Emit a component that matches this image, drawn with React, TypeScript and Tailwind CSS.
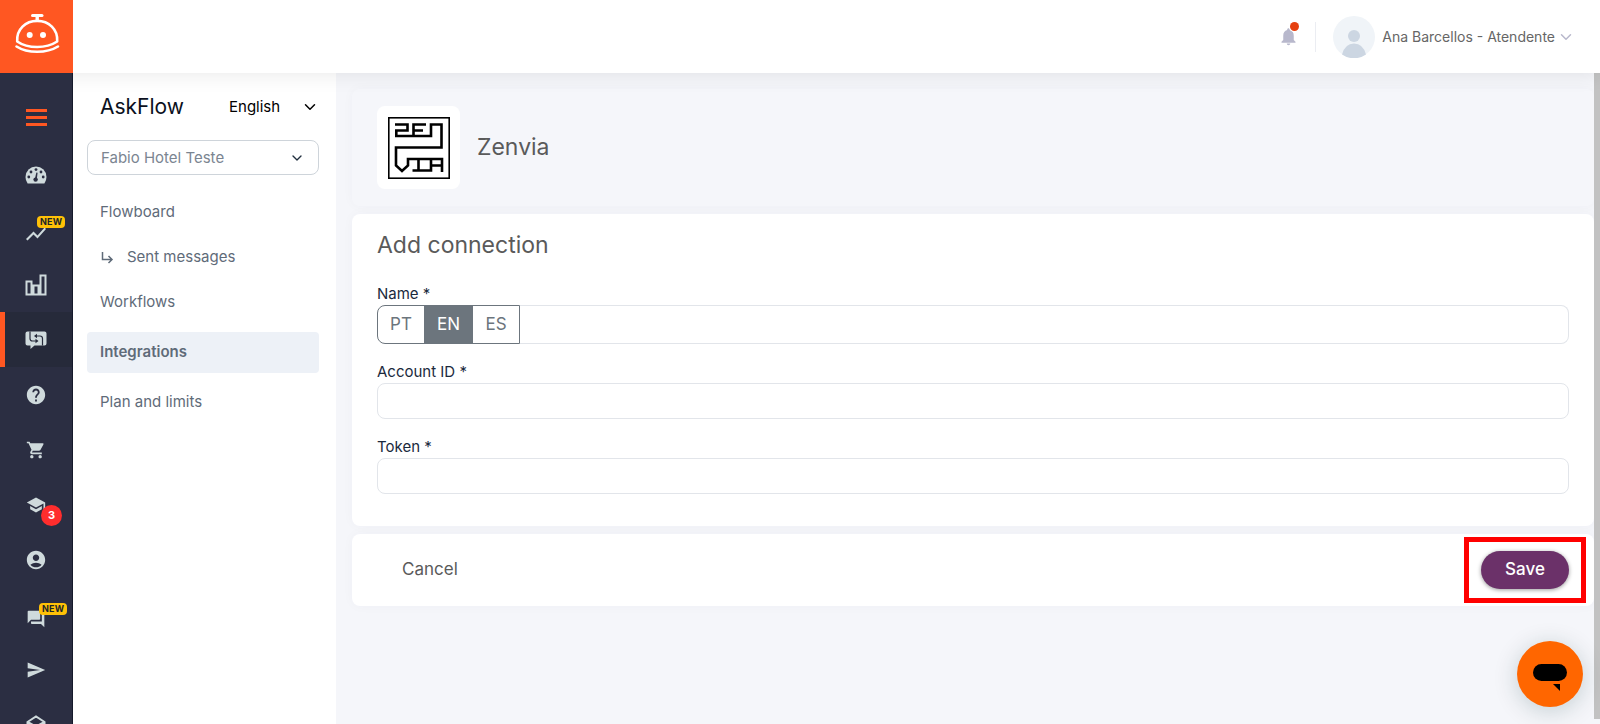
import type { ReactNode } from "react";
import { ChevronDown } from "lucide-react";
import {
  MdAccountCircle,
  MdForum,
  MdHelp,
  MdNotifications,
  MdSchool,
  MdSend,
  MdShoppingCart,
  MdShowChart,
} from "react-icons/md";

function BellBotLogo() {
  return (
    <svg width="46" height="42" viewBox="0 0 46 42" fill="none" stroke="#fff" aria-hidden="true">
      <path d="M18.5 2.5H28" strokeWidth="3" strokeLinecap="round" />
      <path d="M23.2 3V8" strokeWidth="3.4" />
      <path
        d="M3.2 28.5C2.4 16.5 11.5 7.9 23.2 7.9S44 16.5 43.2 28.5C37.5 32.2 30.5 34 23.2 34S8.5 32.2 3.2 28.5Z"
        strokeWidth="2.6"
        strokeLinejoin="round"
      />
      <path
        d="M2.5 33.5C8 37 15 38.8 23.2 38.8S38.4 37 44 33.5"
        strokeWidth="2.6"
        strokeLinecap="round"
      />
      <circle cx="15.7" cy="22" r="3" fill="#fff" stroke="none" />
      <circle cx="29" cy="22" r="3" fill="#fff" stroke="none" />
    </svg>
  );
}

function GaugeIcon() {
  return (
    <svg width="22" height="18" viewBox="0 0 22 18" aria-hidden="true">
      <path d="M2.6 17.5Q0.5 14.500 0.5 11A10.500 10.500 0 0 1 21.5 11Q21.500 14.500 19.400 17.5Z" fill="currentColor" />
      <g fill="#2b2e42">
        <circle cx="3.8" cy="11" r="1.4" />
        <circle cx="6" cy="6" r="1.4" />
        <circle cx="11" cy="3.6" r="1.4" />
        <circle cx="16" cy="6" r="1.4" />
        <circle cx="18.2" cy="11" r="1.4" />
        <circle cx="10.6" cy="13.6" r="2.2" />
        <path d="M9.800 13L11.400 6.500L12.600 6.800L11.800 13.500Z" />
      </g>
    </svg>
  );
}

function BarsIcon() {
  return (
    <svg width="22" height="22" viewBox="0 0 22 22" fill="none" stroke="currentColor" strokeWidth="2" aria-hidden="true">
      <path d="M1.5 7.5H6.5V20.5H1.5ZM8.5 11.5H13.5V20.5H8.5ZM15.5 1.5H20.5V20.5H15.5Z" />
    </svg>
  );
}

function FlowChatIcon() {
  return (
    <svg width="22" height="18" viewBox="0 0 22 18" aria-hidden="true">
      <path
        d="M2.5 0.5H19.5Q21.5 0.5 21.5 2.5V12.5Q21.5 14.5 19.5 14.5H9.5L5.5 18V14.5H2.5Q0.5 14.5 0.5 12.5V2.5Q0.5 0.5 2.5 0.5Z"
        fill="currentColor"
      />
      <g fill="none" stroke="#262a3a" strokeWidth="1.2">
        <path d="M5 0.5V7.5Q5 10 7.5 10H11" />
        <path d="M17.5 14.5V7.5Q17.5 5 15 5H11.5" />
      </g>
      <path d="M10.5 7.8L13.5 10L10.5 12.2ZM12 2.8L9 5L12 7.2Z" fill="#262a3a" />
    </svg>
  );
}

function CubeIcon() {
  return (
    <svg width="20" height="20" viewBox="0 0 20 20" fill="none" stroke="currentColor" strokeWidth="2" aria-hidden="true">
      <path d="M1.5 7L10 1.5L18.5 7V14L10 18.5L1.5 14ZM1.5 7L10 11.5L18.5 7M10 11.5V18.5" />
    </svg>
  );
}

function ZenviaLogo() {
  return (
    <svg width="62" height="62" viewBox="0 0 62 62" fill="none" stroke="#000" aria-hidden="true">
      <rect x="0.8" y="0.8" width="60.4" height="60.4" strokeWidth="1.6" />
      <g strokeWidth="2.6">
        <path d="M7 7.5H19.5V13.5H8.3V19H43V7.5H53.5V30.5H8V48.5L14 54L20 48.5V42H54V55" />
        <path d="M38 7.5H25.5V19M25.5 13.5H35" />
        <path d="M30.5 42V53.5M24.5 53.5H43V42M43 48.5H53" />
      </g>
    </svg>
  );
}

function NewBadge() {
  return (
    <span className="absolute top-0.5 left-[13px] rounded-sm bg-[#ffc107] px-[3px] text-[9px] leading-3 font-bold tracking-wide text-[#212529]">
      NEW
    </span>
  );
}

type RailItem = { label: string; icon: ReactNode; isNew?: boolean; count?: number; active?: boolean };

const railItems: RailItem[] = [
  { label: "Dashboard", icon: <GaugeIcon /> },
  { label: "Performance", icon: <MdShowChart size={24} />, isNew: true },
  { label: "Reports", icon: <BarsIcon /> },
  { label: "AskFlow", icon: <FlowChatIcon />, active: true },
  { label: "Help", icon: <MdHelp size={22} /> },
  { label: "Store", icon: <MdShoppingCart size={20} /> },
  { label: "Academy", icon: <MdSchool size={20} />, count: 3 },
  { label: "Account", icon: <MdAccountCircle size={22} /> },
  { label: "Chats", icon: <MdForum size={20} />, isNew: true },
  { label: "Send", icon: <MdSend size={20} /> },
  { label: "Products", icon: <CubeIcon /> },
];

const menuItems = [
  { label: "Flowboard" },
  { label: "Sent messages", nested: true },
  { label: "Workflows" },
  { label: "Integrations", active: true },
  { label: "Plan and limits" },
];

const languages = ["PT", "EN", "ES"];

function Rail() {
  return (
    <nav
      className="relative z-20 w-[73px] shrink-0 overflow-hidden border-r border-[#15192b] bg-[#2b2e42] text-[#cfdadc]"
      aria-label="Main"
    >
      <button type="button" aria-label="Toggle menu" className="mt-[15px] flex h-[59px] w-full flex-col items-center justify-center gap-1">
        <span className="h-[3px] w-[21px] bg-[#ff5722]" />
        <span className="h-[3px] w-[21px] bg-[#ff5722]" />
        <span className="h-[3px] w-[21px] bg-[#ff5722]" />
      </button>
      {railItems.map((item) => (
        <a
          key={item.label}
          href="#"
          aria-label={item.label}
          className={
            item.active
              ? "flex h-[55px] items-center justify-center border-l-[5px] border-[#ff5722] bg-[#262a3a] pr-[5px]"
              : "flex h-[55px] items-center justify-center"
          }
        >
          <span className={item.isNew ? "relative pt-2" : "relative"}>
            {item.icon}
            {item.isNew && <NewBadge />}
            {item.count && (
              <span className="absolute top-2.5 left-[15px] flex size-[21px] items-center justify-center rounded-full bg-[#ff2d2d] text-[11px] font-bold text-white">
                {item.count}
              </span>
            )}
          </span>
        </a>
      ))}
    </nav>
  );
}

function Menu() {
  return (
    <aside className="w-[263px] shrink-0 bg-white pt-4 pr-[17px] pl-[14px]">
      <div className="flex h-[35px] items-center justify-between pl-[13px]">
        <h1 className="text-[21px] text-[#0b1020]">AskFlow</h1>
        <div className="relative">
          <select aria-label="Language" className="w-[90px] appearance-none bg-transparent text-[15px] text-black outline-none">
            <option>English</option>
          </select>
          <ChevronDown size={18} className="pointer-events-none absolute top-1/2 right-0 -translate-y-1/2 text-black" />
        </div>
      </div>
      <div className="relative mt-4">
        <select
          aria-label="Hotel"
          className="h-[35px] w-full appearance-none rounded-lg border border-[#ced4da] bg-white px-[13px] pt-0.5 text-[15px] text-[#7b8591] outline-none"
        >
          <option>Fabio Hotel Teste</option>
        </select>
        <ChevronDown size={16} className="pointer-events-none absolute top-1/2 right-[14px] -translate-y-1/2 text-[#212f3f]" />
      </div>
      <nav className="mt-[15px] text-[15px] text-[#5f6b79]" aria-label="AskFlow">
        {menuItems.map((item) => (
          <a
            key={item.label}
            href="#"
            className={
              item.active
                ? "my-[7px] flex h-[41px] items-center rounded bg-[#edf1f7] px-[13px] font-semibold"
                : "flex h-[45px] items-center px-[13px]"
            }
          >
            {item.nested && (
              <svg width="14" height="14" viewBox="0 0 14 14" fill="none" stroke="currentColor" strokeWidth="1.5" className="mr-[13px]" aria-hidden="true">
                <path d="M2.5 1V8.5H12M8.5 5L12 8.5L8.5 12" />
              </svg>
            )}
            {item.label}
          </a>
        ))}
      </nav>
    </aside>
  );
}

function TopBar() {
  return (
    <header className="relative z-10 flex h-[73px] shrink-0 items-center justify-between bg-white shadow-[0_0_20px_rgba(0,0,0,0.1)]">
      <a href="#" aria-label="Home" className="flex size-[73px] justify-center bg-[#ff5722] pt-[13px]">
        <BellBotLogo />
      </a>
      <div className="flex items-center pr-[25px]">
        <button type="button" aria-label="Notifications" className="relative mr-4 text-[#b8b8cc]">
          <MdNotifications size={21} />
          <span className="absolute -top-1 right-0 size-[9px] rounded-full bg-[#e64010] ring-1 ring-white" />
        </button>
        <span className="h-[30px] w-px bg-[#ebedf2]" />
        <button type="button" className="ml-[17px] flex items-center text-[14px] text-[#666]">
          <svg width="42" height="42" viewBox="0 0 42 42" className="mr-[7px]" aria-hidden="true">
            <circle cx="21" cy="21" r="21" fill="#f0f4f8" />
            <circle cx="21" cy="20" r="6" fill="#ccd6e2" />
            <path d="M9 38.5Q12 27.5 21 27.5T33 38.5A21 21 0 0 1 9 38.5Z" fill="#ccd6e2" />
          </svg>
          Ana Barcellos - Atendente
          <ChevronDown size={18} className="ml-0.5 text-[#b8b8cc]" />
        </button>
      </div>
    </header>
  );
}

function Field({ id, label }: { id: string; label: string }) {
  return (
    <div className="mt-[17px]">
      <label htmlFor={id} className="block leading-[22px]">
        {label}
      </label>
      <input id={id} type="text" className="block h-[36px] w-full rounded-lg border border-[#e2e5ea] px-3 outline-none" />
    </div>
  );
}

export default function App() {
  return (
    <div className="flex h-screen flex-col overflow-hidden bg-[#f5f6fa] font-['Inter',sans-serif]">
      <TopBar />
      <div className="flex min-h-0 flex-1">
        <Rail />
        <Menu />
        <main className="flex min-w-0 flex-1 flex-col gap-2 pt-4 pl-4 text-[#5a5a5a]">
          <section className="flex h-[117px] items-center gap-[17px] rounded-lg px-[25px] shadow-[0_0_12px_rgba(40,40,90,0.03)]">
            <div className="flex size-[83px] items-center justify-center rounded-lg bg-white">
              <ZenviaLogo />
            </div>
            <h2 className="text-[23px]">Zenvia</h2>
          </section>

          <section className="rounded-lg bg-white px-[25px] pt-[15px] pb-8 shadow-[0_0_12px_rgba(40,40,90,0.03)]">
            <h2 className="text-[23px] leading-8">Add connection</h2>
            <form className="mt-[22px] text-[15px] text-[#1b2a3d]">
              <label htmlFor="name" className="block leading-[22px]">
                Name *
              </label>
              <div className="flex h-[39px]">
                <div className="flex overflow-hidden rounded-l-lg border border-[#6c757d] text-[17px] text-[#6c757d]">
                  {languages.map((lang) => (
                    <button
                      key={lang}
                      type="button"
                      aria-pressed={lang === "EN"}
                      className={lang === "EN" ? "w-[49px] bg-[#6c757d] text-white" : "w-[46px]"}
                    >
                      {lang}
                    </button>
                  ))}
                </div>
                <input id="name" type="text" className="min-w-0 flex-1 rounded-r-lg border border-l-0 border-[#e2e5ea] px-3 outline-none" />
              </div>
              <Field id="account" label="Account ID *" />
              <Field id="token" label="Token *" />
            </form>
          </section>

          <section className="flex h-[72px] items-center justify-between rounded-lg bg-white pr-2 pl-[50px] shadow-[0_0_12px_rgba(40,40,90,0.03)]">
            <button type="button" className="text-[17px]">
              Cancel
            </button>
            <div className="border-[5px] border-[#f00] px-3 py-[9px]">
              <button type="button" className="h-[38px] w-[88px] rounded-full bg-[#6b3169] text-[17px] font-medium text-white shadow-[0_1px_4px_rgba(0,0,0,0.4)]">
                Save
              </button>
            </div>
          </section>
        </main>
        <div className="mb-[5px] w-1.5 shrink-0 bg-[#c2c2c2]" />
      </div>

      <button
        type="button"
        aria-label="Open chat"
        className="fixed right-[17px] bottom-[17px] flex size-[66px] items-center justify-center rounded-full bg-[#ff6600] pt-2 shadow-[0_4px_24px_rgba(0,50,50,0.2)]"
      >
        <svg width="34" height="28" viewBox="0 0 34 28" aria-hidden="true">
          <rect width="34" height="17" rx="8.5" />
          <path d="M20 20H27V27Z" />
        </svg>
      </button>
    </div>
  );
}
